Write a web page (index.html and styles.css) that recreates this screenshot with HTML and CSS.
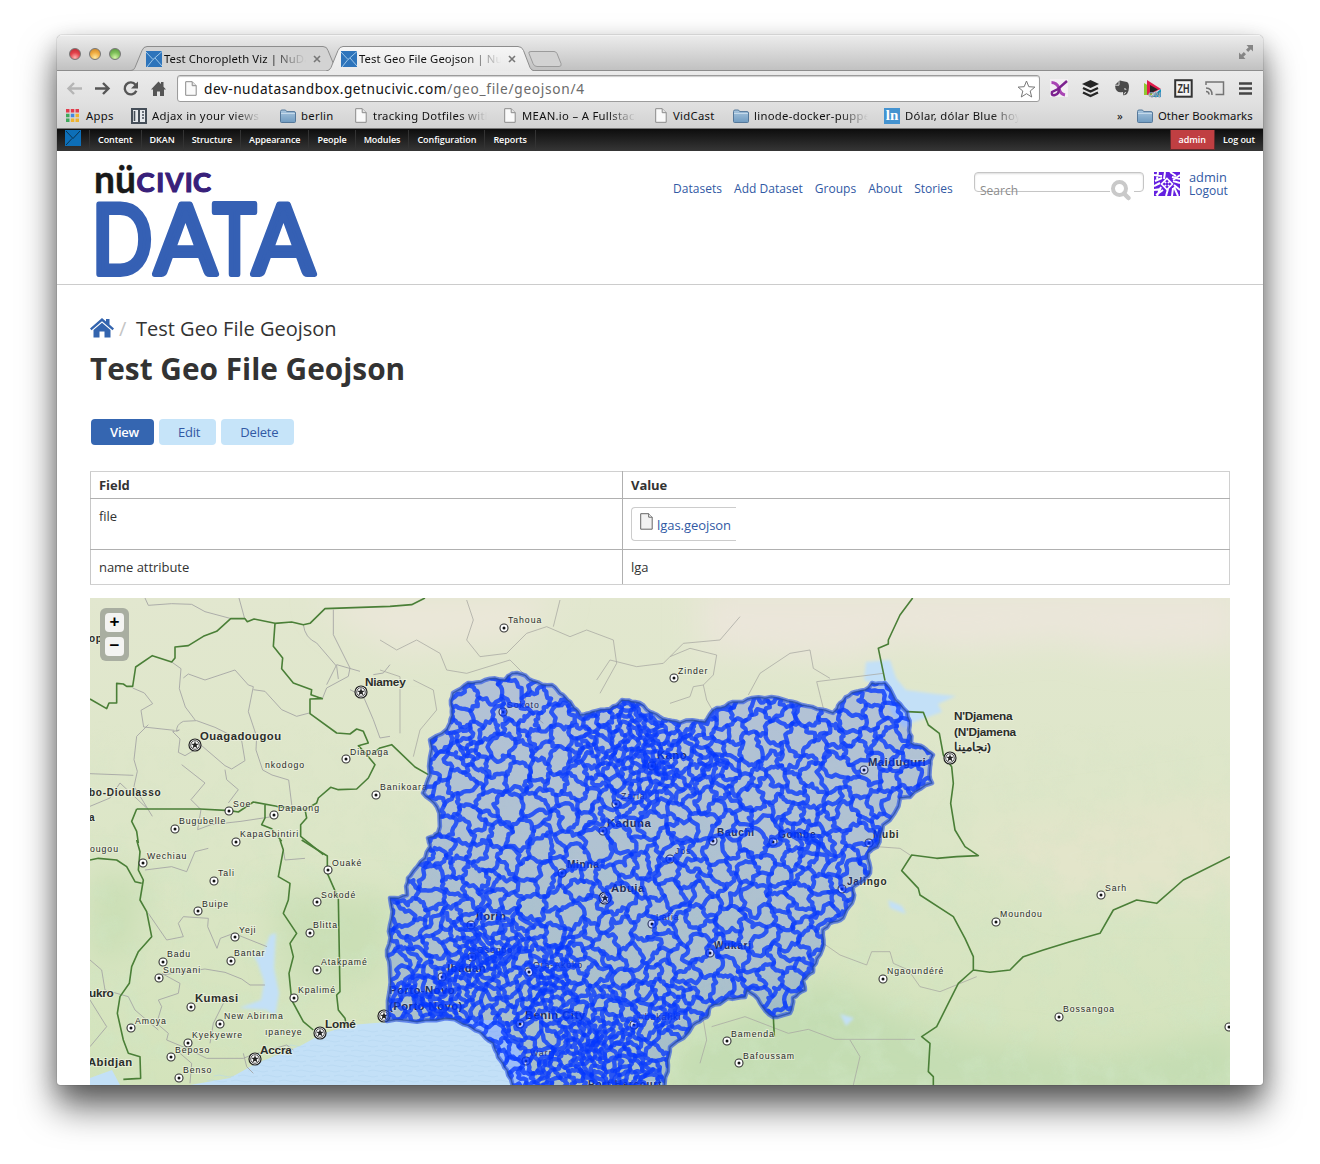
FILE: index.html
```html
<!DOCTYPE html>
<html lang="en">
<head>
<meta charset="utf-8">
<title>Test Geo File Geojson | NuData</title>
<link rel="stylesheet" href="styles.css">
</head>
<body>
<svg width="0" height="0" class="defs">
  <defs>
    <linearGradient id="folderFill" x1="0" y1="0" x2="0" y2="1"><stop offset="0" stop-color="#a9c6df"/><stop offset="1" stop-color="#6f9bc0"/></linearGradient>
    <symbol id="folder" viewBox="0 0 16 14"><path d="M.5 12.500V2.500Q.5 1 2 1h3.500l1.200 1.600h7.300q1.500 0 1.500 1.400v8.500q0 1-1 1h-13q-1 0-1-1z" fill="url(#folderFill)" stroke="#55789a"/><path d="M1 4.500h14" stroke="#c4d9ea"/></symbol>
    <symbol id="page" viewBox="0 0 12 15"><path d="M.7.7h6.500l4 4v9.600H.7z" fill="#fafafa" stroke="#8b8b8b"/><path d="M7.200.7v4h4" fill="#e4e4e4" stroke="#8b8b8b"/></symbol>
    <symbol id="brand" viewBox="0 0 16 16"><path d="M0 0h16v16H0z" fill="#2d74bb"/><path d="M0 1l7 7.500L16 .5M7 8.500L1 16M9 7l7 8" stroke="#a9d0ee" stroke-width=".9" fill="none"/></symbol>
  </defs>
</svg>
<div class="window">
  <div class="tabstrip">
    <svg class="tabshapes" width="1206" height="36" viewBox="57 35 1206 36">
      <defs><linearGradient id="tabOn" x1="0" y1="0" x2="0" y2="1"><stop offset="0" stop-color="#f6f6f6"/><stop offset="1" stop-color="#e9e9e9"/></linearGradient></defs>
      <path d="M57 70.500H1263" stroke="#8d8d8d"/>
      <path d="M131 70.500q3 0 4-3l7-17q1.500-4 5-4h176q4 0 5 4l7 17q1 3 4 3" fill="#d3d3d3" stroke="#8d8d8d"/>
      <path d="M326 71q4-.5 5-3.500l7-17q1.500-4 5-4h175q4 0 5.500 4l6.500 17q1 3 5 3.500" fill="url(#tabOn)" stroke="#8d8d8d"/>
      <path d="M531 51.500h23q2 0 3 2l4 10q1 3-2 3h-22q-3 0-4-3l-4-10q-1-2 2-2z" fill="#d2d2d2" stroke="#9b9b9b"/>
    </svg>
    <div class="lights"><i class="red"></i><i class="amber"></i><i class="green"></i></div>
    <div class="tab"><svg width="16" height="16"><use href="#brand"/></svg><span class="fade">Test Choropleth Viz | NuData</span><svg class="close" width="8" height="8" viewBox="0 0 8 8"><path d="M1 1l6 6M7 1L1 7"/></svg></div>
    <div class="tab"><svg width="16" height="16"><use href="#brand"/></svg><span class="fade">Test Geo File Geojson | NuData</span><svg class="close" width="8" height="8" viewBox="0 0 8 8"><path d="M1 1l6 6M7 1L1 7"/></svg></div>
    <svg class="expand" width="14" height="14" viewBox="0 0 14 14" fill="#858585"><path d="M7.500 0H14v6.500L11.800 4.300 9.200 7 7 4.800 9.600 2.200zM6.500 14H0V7.500l2.200 2.200L4.800 7 7 9.200 4.400 11.800z"/></svg>
  </div>
  <div class="toolbar">
    <svg class="navicons" width="104" height="18" viewBox="64 80 104 18" fill="none" stroke-width="2.400">
      <path d="M82 88.500H69M74 83l-5.500 5.500 5.500 5.500" stroke="#b5b5b5"/>
      <path d="M95 88.500h13M103 83l5.500 5.500-5.500 5.500" stroke="#555"/>
      <path d="M135.500 84.700a6 6 0 1 0 .8 6" stroke="#555"/><path d="M138 81.500v7h-7z" fill="#555"/>
      <path d="M151 89.500l7.500-8 2.500 2.600v-2.100h2.500v4.800l2.500 2.700h-2v6.500h-4v-4.500h-3v4.500h-4v-6.500z" fill="#555"/>
    </svg>
    <div class="urlbar">
      <svg width="12" height="15"><use href="#page"/></svg>
      <span class="url">dev-nudatasandbox.getnucivic.com<em>/geo_file/geojson/4</em></span>
      <svg width="19" height="18" viewBox="0 0 19 18"><path d="M9.500 1l2.300 5.700 6.100.4-4.700 3.900 1.500 6-5.200-3.300L4.300 17l1.500-6L1.100 7.100l6.100-.4z" fill="#fff" stroke="#777"/></svg>
    </div>
    <svg class="extensions" width="210" height="22" viewBox="1047 78 210 22">
      <path d="M1050 79h18v18h-18z" fill="#f3eff3"/><path d="M1051.500 82.500q5 0 7.500 5.500 1 6 6 7" fill="none" stroke="#a945b4" stroke-width="3"/><path d="M1067 81l-9 8-6 3q-1 4 3 3 4-1 4-6" fill="none" stroke="#7d2290" stroke-width="2.500"/>
      <path d="M1090.500 80l8.500 4-8.500 4-8.500-4z" fill="#252525"/><path d="M1083 88l7.500 3.500 7.500-3.500M1083 92.500l7.500 3.500 7.500-3.500" fill="none" stroke="#252525" stroke-width="2.400"/>
      <path d="M1115 85l4-4q1-1 3 0l5 1q2 1 2 5t-2 7q-3 2-4 1v-3q-4 1-6-1-2-2-2-6z" fill="#4b4b4b"/><path d="M1115 85.200h4v-4M1124 89q2-1 2 1M1124 94.500q0-2 2-2" stroke="#d9d9d9" fill="none"/>
      <path d="M1144 83v12h8v-7z" fill="#8fc831"/><path d="M1147 80l14 9-14 6z" fill="#e11c4b"/><path d="M1150 85l8 4.500-8 4z" fill="#222"/><path d="M1161 89v8h-10z" fill="#159ac4"/><text x="1148.500" y="97" class="badge">ON</text>
      <rect x="1175.200" y="80.200" width="16.500" height="16.500" fill="#f4f4f4" stroke="#333" stroke-width="2"/><text x="1177.500" y="92.700" class="zh" textLength="12" lengthAdjust="spacingAndGlyphs">ZH</text>
      <path d="M1206 85v-3h17.500v12.500h-8M1206 88q6 0 6 7M1206 91.500q3 0 3 3" fill="none" stroke="#747474" stroke-width="1.500"/>
      <path d="M1239 83.500h13M1239 88.500h13M1239 93.500h13" stroke="#444" stroke-width="2.700"/>
    </svg>
  </div>
  <div class="bookmarks">
    <span class="bm apps"><svg width="13" height="13" viewBox="0 0 13 13"><path d="M0 0h3.500v3.500H0zM4.800 0h3.500v3.500H4.800zM9.500 0H13v3.500H9.500z" fill="#e23b4b"/><path d="M0 4.800h3.500v3.500H0z" fill="#3fa85a"/><path d="M4.800 4.800h3.500v3.500H4.800z" fill="#4387e0"/><path d="M9.500 4.800H13v3.500H9.500zM4.800 9.500h3.500V13H4.800zM9.500 9.500H13V13H9.500z" fill="#eeb32f"/><path d="M0 9.500h3.500V13H0z" fill="#3fa85a"/></svg>Apps</span>
    <span class="bm b1"><svg width="16" height="16" viewBox="0 0 16 16"><path d="M0 0h16v16H0z" fill="#454e58"/><path d="M2 2h5v12H2zM9 2h5v12H9z" fill="#e6e9ec"/><path d="M3.500 3v10M11 4h2M11 7h2M11 10h2" stroke="#454e58" stroke-width="1.600"/></svg><span class="fade">Adjax in your views - a</span></span>
    <span class="bm b2"><svg width="16" height="14"><use href="#folder"/></svg>berlin</span>
    <span class="bm b3"><svg width="12" height="15"><use href="#page"/></svg><span class="fade">tracking Dotfiles with git</span></span>
    <span class="bm b4"><svg width="12" height="15"><use href="#page"/></svg><span class="fade">MEAN.io – A Fullstack</span></span>
    <span class="bm b5"><svg width="12" height="15"><use href="#page"/></svg>VidCast</span>
    <span class="bm b6"><svg width="16" height="14"><use href="#folder"/></svg><span class="fade">linode-docker-puppet</span></span>
    <span class="bm b7"><i class="ln">ln</i><span class="fade">Dólar, dólar Blue hoy en</span></span>
    <span class="bm b8">»</span>
    <span class="bm b9"><svg width="16" height="14"><use href="#folder"/></svg>Other Bookmarks</span>
  </div>
  <nav class="admin">
    <svg width="16" height="16" viewBox="0 0 16 16"><path d="M0 0h16v16H0z" fill="#0d6fb8"/><path d="M1 1l7 7.500L15 1M7 8.500L1 15" stroke="#0b3350" fill="none"/></svg>
    <a>Content</a><a>DKAN</a><a>Structure</a><a>Appearance</a><a>People</a><a>Modules</a><a>Configuration</a><a class="last">Reports</a>
    <a class="user">admin</a><a class="out">Log out</a>
  </nav>
  <header class="head">
    <svg class="logo" width="226" height="120" viewBox="94 160 226 120">
      <text class="nu" y="192.500"><tspan x="94" textLength="21" lengthAdjust="spacingAndGlyphs">n</tspan><tspan x="115" textLength="21" lengthAdjust="spacingAndGlyphs">ü</tspan></text>
      <text class="civic" y="192.300"><tspan x="136.500" textLength="18" lengthAdjust="spacingAndGlyphs">C</tspan><tspan x="156.300">I</tspan><tspan x="165.500" textLength="18" lengthAdjust="spacingAndGlyphs">V</tspan><tspan x="184.800">I</tspan><tspan x="193" textLength="18" lengthAdjust="spacingAndGlyphs">C</tspan></text>
      <text class="data" y="273.800"><tspan x="91.500" textLength="61" lengthAdjust="spacingAndGlyphs">D</tspan><tspan x="154.500" textLength="62" lengthAdjust="spacingAndGlyphs">A</tspan><tspan x="213" textLength="43" lengthAdjust="spacingAndGlyphs">T</tspan><tspan x="252.500" textLength="62" lengthAdjust="spacingAndGlyphs">A</tspan></text>
    </svg>
    <div class="menu"><a>Datasets</a><a>Add Dataset</a><a>Groups</a><a>About</a><a>Stories</a></div>
    <div class="search"><span>Search</span><svg width="24" height="28" viewBox="0 0 24 28"><rect width="24" height="28" rx="3" fill="#fff"/><circle cx="9.500" cy="11.500" r="6.500" fill="none" stroke="#c9c9c9" stroke-width="4"/><path d="M14 16.500l4.500 4.500" stroke="#c9c9c9" stroke-width="4.500" stroke-linecap="round"/></svg></div>
    <svg class="avatar" width="26" height="24" viewBox="0 0 26 24"><path d="M0 0h26v24H0z" fill="#6420e0"/><g stroke="#fff" fill="none" stroke-width="2"><path d="M0 3l8 1M1 9l7-3M4 0l-1 7M11 0l-1 7M16 0l6 4M19 8l7-5M18 5l8 2M26 11l-7-2M26 18l-6-5M24 24l-4-9M18 24l1-8M12 24l2-7M9 18l-7 5M0 18l7-1M0 14l6-3M3 24l4-9"/><path d="M13 6.500l5.500 5.500-5.500 5.500L7.500 12zM10 9l6 6M16 9l-6 6" stroke-width="1.600"/></g><circle cx="13" cy="12" r="1.500" fill="#6420e0"/></svg>
    <div class="account"><a>admin</a><a>Logout</a></div>
  </header>
  <main class="content">
    <div class="crumb"><svg width="24" height="20" viewBox="0 0 24 20" fill="#3364ae"><path d="M0 10.500L12 0l4 3.500V1h3.500v5.500L24 10.500l-1.500 1.700L12 3.200 1.500 12.200z"/><path d="M3.500 12L12 4.800l8.500 7.200v7.500h-6v-6h-5v6h-6z"/></svg><i>/</i><span>Test Geo File Geojson</span></div>
    <h1>Test Geo File Geojson</h1>
    <div class="actions"><a class="active">View</a><a>Edit</a><a>Delete</a></div>
    <table>
      <tr class="r1"><th>Field</th><th>Value</th></tr>
      <tr class="r2"><td>file</td><td><span class="file"><svg width="13" height="17" viewBox="0 0 13 17"><path d="M.7.7h8l3.500 3.500v12H.7z" fill="#f2f2f2" stroke="#666"/><path d="M8.700.7v3.500h3.500" fill="#fff" stroke="#666"/></svg><a>lgas.geojson</a></span></td></tr>
      <tr class="r3"><td>name attribute</td><td>lga</td></tr>
    </table>
    <div class="map">
      <svg id="map" width="1140" height="487" viewBox="90 598 1140 487">
        <defs>
          <linearGradient id="land" x1="0" y1="0" x2="0" y2="1"><stop offset="0" stop-color="#e2e7cf"/><stop offset=".5" stop-color="#dce6c7"/><stop offset="1" stop-color="#d3e3bb"/></linearGradient>
          <filter id="soft" x="-30%" y="-30%" width="160%" height="160%"><feGaussianBlur stdDeviation="16"/></filter>
          <filter id="edge"><feGaussianBlur stdDeviation="1.500"/></filter>
          <filter id="mottle" x="0" y="0" width="100%" height="100%"><feTurbulence type="fractalNoise" baseFrequency=".035" numOctaves="4" seed="6"/><feColorMatrix values="0 0 0 0 .62  0 0 0 0 .79  0 0 0 0 .55  2.600 0 0 0 -1.150"/></filter>
          <linearGradient id="fadeDown" x1="0" y1="0" x2="0" y2="1"><stop offset=".25" stop-color="#000"/><stop offset=".6" stop-color="#aaa"/><stop offset="1" stop-color="#fff"/></linearGradient>
          <mask id="south"><path d="M90 598h1140v487H90z" fill="url(#fadeDown)"/></mask>
          <clipPath id="countryClip"><path class="country"/></clipPath>
        </defs>
        <path d="M90 598h1140v487H90z" fill="url(#land)"/>
        <g filter="url(#soft)">
          <path d="M700 590H1240V650L1120 655 1060 640 960 650 900 640 850 660 700 650z" fill="#ebe6da"/>
          <path d="M320 595H560L520 640 400 650 340 620z" fill="#ebe7d9"/>
          <path d="M960 830L1240 790V900L1060 900z" fill="#e3e5ca"/>
          <path d="M680 1040L820 980 960 1040 1100 1060 1240 1030V1100H660z" fill="#c4ddb3"/>
          <path d="M90 870L150 880 130 960 90 960zM270 890L400 900 380 980 290 990z" fill="#cbdfb6"/>
        </g>
        <g mask="url(#south)"><path d="M90 598h1140v487H90z" filter="url(#mottle)" opacity=".5"/></g>
        <g fill="#c3e0f7">
          <path d="M190 1085L230 1078 255 1064 300 1046 322 1034 350 1025 388 1022 430 1020 500 1020 540 1085zM90 1078L112 1070 120 1085H90z"/>
          <path d="M866 662l24-2 6 18 10 12 30 4 20 2-18 8 4 8-28 10 -10 6-12-14-12-28-16-6z" filter="url(#edge)"/>
          <path d="M270 935l6-2-2 35 5 25-4 25-8-8-28-2 22-8 3-18-6-18-6-12 10 4zM888 900l14 6 4 8-16-6zM840 1014l14 4-8 8z" filter="url(#edge)"/>
        </g>
        <g id="waves" stroke="#b4d5f0" fill="none" opacity=".5"/>
        <g transform="translate(90 598) scale(.33333)" fill="none" stroke="#a3a3a3" stroke-width="2.600" stroke-linejoin="round">
          <path class="minor" d="M165 0l10 22 70-5 60 2 40 22 75 20M447 0l17 62M730 35v75l50 100-5 25-65 35-12 30M640 80q5 40 40 55l60 70 5 38M245 192l28 20-5 60 18 55 30 40M280 240l15-12 50 18 90-30 40 45 15 5-15 75 25 75-2 40 20 60 28 15 50 15 10 80M490 275l35 5 50 55 45 20 38-10M128 270l35 15 25 32-35 20 8 50 92 10M175 380l-35 35-8 70 10 35-10 45 55 90M260 400q-2-20 20-30l40-2 55 20 80 40 10 60-40 25-20-10-70-60-50 30-20-10 5-40-22-22 20-5zM275 500l70 55-42 50 30 30-10 60 40-15 90-10 100-15M405 515l5 30 35 30-30 40M0 527l130 5M0 625l60-25 30-45 80 75M810 220l-70-20-30 60M780 275l40 20 30 70 20 55 30-5M900 200l-20 25-30 5"/>
        </g>
        <g transform="translate(90 840) scale(.33333)" fill="none" stroke="#a3a3a3" stroke-width="2.600" stroke-linejoin="round">
          <path d="M165 90l80-10 45 15 25-60 40-10M175 220l55 80 50-10-15-40 15-20 75 5-2 25 28 65 10-30 40-15 100 40M215 400l55 30-5 30-60 20 10 20-15 50 35 30-5 20 60 25 60 30 110 0 25-10 105-30 20 15M215 405l130-18 60 10 50 20 25 18h45M400 490l-30 60-10 60M270 640l35 30-5 60M0 360l35 30 10 60 70 20 20 40 70 60M0 480l50 80-50 60M580 30l5 30 60-5M460 640l10 40 20 20"/>
        </g>
        <g transform="translate(670 640) scale(.33333)" fill="none" stroke="#a9a9a2" stroke-width="2.300" stroke-linejoin="round">
          <path d="M0 50l60-25 80 20-10 60-30 30 10 45 20 35M0 190l60-20 10-30 30-5M235 165l35-65 90-60 60-10 10 55 50 30M640 100l-200 25 20 80M460 910l50 35 80 30 15-40 55 0 10 35 45 20 35 50 60 15 110-45M125 1160l100-30 130 50 60-12 80 30 240 0M540 1200l30 50-20 85M620 620l70 5 30 20M100 1140l10 60-20 70"/>
        </g>
        <g transform="translate(380 600) scale(.33333)" fill="none" stroke="#a9a9a2" stroke-width="2.300" stroke-linejoin="round">
          <path d="M0 120l50 30 60-30 70 40 20 50 60 10 130-40 60 60-20 80 60 50M260 0l20 60-20 60 40 50 80-10 60-60 60-20 70 30 50-20 80 30 10 70-50 90M540 0l-20 80M650 240l40-60 80 20 80-10 60-60 110-10 60-70M60 400v-170l-60-20M100 470l20-80 50-60-10-60-60-30"/>
        </g>
        <g fill="none" stroke="#4a7f37" stroke-linejoin="round">
          <g transform="translate(90 598) scale(.33333)" stroke-width="4.800">
            <path d="M0 303L50 332 57 315H80V256L100 258 110 265 128 265 137 207 187 173 245 192 255 180V147L295 143 340 115 380 100 422 62H465L472 71 492 63 555 76 605 72 640 80 660 76 705 32 900 25 965 20 1005 0"/>
            <path d="M555 76L550 145 578 180 575 212 610 255 665 275 663 290 697 302 660 303V347L740 405 780 408 800 393 820 400 835 435 805 443 830 470 855 500 835 540 800 573 745 575 722 568 685 600 680 615 645 635 650 660 632 680V715L700 770M845 470L870 450 905 440 975 507 1015 530"/>
            <path d="M140 633L125 670 140 700 145 735M140 633H330L420 638 445 642 490 612 560 625 643 635M525 618V660L515 680 545 692 575 730"/>
          </g>
          <g transform="translate(90 840) scale(.33333)" stroke-width="4.800">
            <path d="M140 0L150 35 145 90 160 120 150 180 170 215 185 290 145 335 125 380 118 430 90 470 82 520 100 600 115 640 150 650 152 715 100 718M0 60L25 55 80 60 110 80 135 125 155 130"/>
            <path d="M570 0L580 30 565 110 600 130 595 180 580 220 620 280 600 310 610 350 597 400 605 480 640 545 670 570M635 0L712 48V100L745 175 750 455 740 465 745 510 765 535 770 560"/>
          </g>
          <g transform="translate(670 640) scale(.33333)" stroke-width="4.800">
            <path d="M728 -126L690 -75 655 0V12L625 25 645 122M710 215L760 217 775 255 808 280 820 345 845 380 850 430 842 490 855 570 885 620 925 647 860 650 800 655 725 645 695 692 745 745 750 765 850 830 885 895 910 950V990L865 1030 830 1100 800 1160 755 1190 780 1210 775 1295 790 1310V1335M910 990L960 997 1020 990 1060 950 1120 930 1200 905 1290 880 1330 810 1400 780 1460 790 1540 720 1680 650"/>
            <path d="M310 1130L313 1190"/>
          </g>
        </g>
        <g id="labels"></g>
        <path class="country" fill="#0033ff" fill-opacity=".2"/>
        <g clip-path="url(#countryClip)"><g id="districts" fill="none" stroke="#0033ff" stroke-opacity=".5" stroke-width="4.200" stroke-linejoin="round"></g></g>
        <path class="country" fill="none" stroke="#1f49e8" stroke-opacity=".6" stroke-width="4.500" stroke-linejoin="round"/>
        <path class="country" fill="none" stroke="#234a9c" stroke-opacity=".7" stroke-width="1.400" stroke-linejoin="round"/>
      </svg>
      <div class="zoomer"><b>+</b><b>−</b></div>
    </div>
  </main>
</div>
<script src="map.js"></script>
</body>
</html>
```
FILE: styles.css
```css
* { box-sizing: border-box; }
body { margin: 0; background: #fff; height: 1164px; overflow: hidden; font-family: "Open Sans", "Noto Sans", sans-serif; font-size: 13px; color: #333; }
svg { display: block; flex: none; }
.defs { position: absolute; }
.window { width: 1206px; height: 1050px; margin: 35px 0 0 57px; border-radius: 5px 5px 3px 3px; overflow: hidden; background: #fff; box-shadow: 0 0 1px rgba(0,0,0,.7), 0 22px 36px rgba(0,0,0,.6), 0 8px 22px rgba(0,0,0,.2); display: flex; flex-direction: column; }
.tabstrip, .toolbar, .bookmarks { font-family: "Noto Sans", sans-serif; color: #111; flex: none; }
.tabstrip { height: 36px; position: relative; display: flex; background: linear-gradient(#ebebeb, #dadada 40%, #c0c0c0); border-top: 1px solid #f4f4f4; }
.tabshapes { position: absolute; left: 0; top: -1px; }
.lights { display: flex; gap: 8px; padding: 12px 0 0 12px; width: 89px; position: relative; }
.lights i { width: 12px; height: 12px; border-radius: 50%; border: 1px solid #777; }
.red { background: radial-gradient(circle at 50% 85%, #ffb4b0, #e2424b 50%, #b92730); }
.amber { background: radial-gradient(circle at 50% 85%, #ffe9a0, #f0ad43 50%, #c88124); }
.green { background: radial-gradient(circle at 50% 85%, #d5f5a8, #7fc05b 50%, #55933a); }
.tab { position: relative; display: flex; width: 195px; height: 16px; margin-top: 15px; font-size: 11.300px; line-height: 16px; letter-spacing: .1px; }
.tab .fade { width: 142px; margin: 0 7px 0 2px; }
.close { margin-top: 4px; fill: none; stroke: #777; stroke-width: 1.600; }
.fade { overflow: hidden; white-space: nowrap; -webkit-mask-image: linear-gradient(90deg, #000 75%, transparent); mask-image: linear-gradient(90deg, #000 75%, transparent); }
.expand { margin: 9px 10px 0 auto; position: relative; }
.toolbar { height: 33px; background: linear-gradient(#ebebeb, #e0e0e0); display: flex; align-items: center; padding: 2px 6px 0 7px; }
.urlbar { margin-left: 9px; width: 863px; height: 27px; border: 1px solid #9c9c9c; border-radius: 3px; background: #fff; box-shadow: inset 0 1px 1px #ccc; display: flex; align-items: center; padding: 0 3px 0 7px; }
.url { flex: 1; margin-left: 7px; font-size: 13.700px; letter-spacing: .48px; color: #111; white-space: nowrap; }
.url em { font-style: normal; color: #6b6b6b; letter-spacing: .7px; }
.extensions { margin-left: 7px; }
.badge { font: bold 8px "Liberation Sans", sans-serif; fill: #fff; stroke: #246; stroke-width: .4px; }
.zh { font: bold 12px "Liberation Sans", sans-serif; fill: #333; }
.bookmarks { height: 25px; background: linear-gradient(#e0e0e0, #d2d2d2); border-bottom: 1px solid #777; display: grid; grid-template-columns: 65px 149px 75px 149px 151px 78px 151px 233px 20px 1fr; padding-left: 9px; font-size: 11.300px; letter-spacing: .3px; }
.bm { display: flex; align-items: center; white-space: nowrap; margin-top: -1px; }
.bm svg, .ln { margin-right: 5px; }
.apps svg { margin-right: 7px; }
.b3 svg, .b4 svg, .b5 svg { margin-right: 6px; }
.b1 .fade { width: 109px; } .b3 .fade, .b4 .fade { width: 114px; } .b6 .fade, .b7 .fade { width: 114px; }
.b9 { letter-spacing: .05px; }
.ln { width: 16px; height: 16px; background: #4493d0; color: #fff; font: bold 15px/15px "Liberation Serif", serif; text-align: center; letter-spacing: 0; }
.admin { height: 22px; flex: none; background: linear-gradient(#0d0d0d, #363636); display: flex; padding: 1px 0 0 8px; font-size: 9px; font-weight: 600; color: #fff; line-height: 20px; }
.admin svg { margin-right: 8px; }
.admin a { padding: 0 8px; border-left: 1px solid #333; letter-spacing: -.06px; }
.admin .last { border-right: 1px solid #333; }
.admin .user { margin-left: auto; background: #c03f42; border: 1px solid #642a2c; border-width: 0 1px 1px; height: 20px; }
.admin .out { border: 0; }
.head { height: 134px; flex: none; border-bottom: 1px solid #ccc; display: flex; padding-left: 37px; color: #3159a4; }
.logo { margin-top: 9px; }
.nu { font: 700 38px Lato, sans-serif; fill: #191919; stroke: #191919; stroke-width: .4px; stroke-linejoin: round; }
.civic { font: 700 27px Lato, sans-serif; fill: #38207a; stroke: #38207a; stroke-width: 1.200px; stroke-linejoin: round; }
.data { font: 400 96px Lato, sans-serif; fill: #3560b4; stroke: #3560b4; stroke-width: 6px; stroke-linejoin: round; }
.menu { display: flex; gap: 12px; margin: 29px 0 0 353px; font-size: 12px; letter-spacing: .03px; line-height: 18px; width: 280px; white-space: nowrap; }
.search { margin: 21px 0 0 21px; width: 170px; height: 20px; flex: none; border: 1px solid #c5c5c5; border-radius: 4px; box-shadow: inset 0 1px 2px #ddd; display: flex; justify-content: space-between; color: #8c8c8c; font-size: 12px; line-height: 16px; padding: 10px 9px 0 5px; }
.search svg { margin-top: -6px; }
.avatar { margin: 21px 0 0 10px; }
.account { display: flex; flex-direction: column; margin: 20px 0 0 9px; font-size: 12.800px; line-height: 13px; }
.account a + a { font-size: 12px; }
.content { padding: 30px 33px 0; }
.crumb { display: flex; align-items: center; height: 28px; font-size: 20px; line-height: 28px; }
.crumb svg { margin-top: -3px; }
.crumb i { color: #c5c5c5; margin: 0 11px 0 5px; width: 6px; font-style: normal; }
h1 { margin: 5px 0 0; height: 42px; font-size: 29.800px; line-height: 42px; font-weight: 700; }
.actions { display: flex; gap: 5px; margin: 29px 0 0 1px; }
.actions a { height: 26px; border-radius: 4px; background: #c6e4f9; color: #3159a4; padding: 0 16px 0 19px; font-size: 13px; line-height: 26px; letter-spacing: -.2px; }
.actions .active { background: #3566b1; color: #fff; font-weight: 600; padding-right: 15px; }
table { width: 1140px; margin-top: 26px; border-collapse: collapse; table-layout: fixed; font-size: 13px; line-height: 18px; }
th, td { text-align: left; vertical-align: top; border: 1px solid #b0b0b0; padding: 8px; letter-spacing: -.05px; }
th { border-top-color: #d0d0d0; }
th:first-child, td:first-child { border-left-color: #c8c8c8; }
th:last-child, td:last-child { border-right-color: #d0d0d0; }
.r3 td { border-bottom-color: #d0d0d0; }
table tr:first-child th:first-child { width: 532px; }
.r1 { height: 27px; } .r1 th { padding: 4px 8px; }
.r2 { height: 51px; } .r3 { height: 35px; }
.file { display: flex; align-items: center; width: 105px; height: 34px; border: 1px solid #ccc; border-right: 0; border-radius: 4px 0 0 4px; padding-left: 8px; color: #3159a4; }
.file svg { margin: -5px 4px 0 0; }
.file a { padding-top: 1px; }
.map { position: relative; margin-top: 13px; height: 487px; }
.zoomer { position: absolute; left: 10px; top: 10px; width: 29px; height: 53px; border-radius: 6px; background: #a9aea1; padding: 5px; display: flex; flex-direction: column; gap: 5px; }
.zoomer b { width: 19px; height: 19px; border-radius: 4px; background: #f4f4f2; font: bold 17px/18px "Liberation Sans", sans-serif; color: #000; text-align: center; }
#labels text { font-family: "Liberation Sans", Arial, sans-serif; fill: #2b2d2a; stroke: #eef2e0; stroke-width: 2px; stroke-opacity: .7; paint-order: stroke; }
#labels .s { font-size: 8.700px; letter-spacing: .95px; }
#labels .m { font-size: 10px; font-weight: bold; letter-spacing: .75px; }
#labels .l { font-size: 11.300px; font-weight: bold; letter-spacing: .45px; }
#labels .c { font-size: 11.800px; font-weight: bold; letter-spacing: -.25px; }
```
FILE: map.js
```js
const border = [[453,693],[468,683],[485,680],[505,680],[508,676],[517,673],[533,681],[552,685],[563,695],[572,705],[580,715],[592,712],[610,709],[622,700],[635,702],[650,712],[663,719],[680,723],[705,722],[717,708],[733,702],[752,698],[778,698],[797,703],[817,709],[833,713],[840,703],[852,693],[865,690],[872,683],[885,683],[893,695],[907,712],[909,730],[911,743],[923,747],[933,755],[930,767],[932,783],[910,797],[900,798],[883,825],[877,847],[868,853],[870,873],[865,878],[853,887],[852,903],[843,918],[830,923],[823,930],[822,950],[813,967],[813,972],[803,980],[805,990],[793,998],[790,1013],[773,1017],[760,1003],[747,990],[745,997],[728,998],[710,1007],[707,1017],[693,1025],[670,1047],[668,1065],[664,1090],[512,1090],[507,1070],[498,1057],[493,1043],[480,1032],[463,1024],[427,1020],[387,1021],[388,1010],[390,973],[387,950],[390,925],[390,898],[407,895],[408,878],[417,867],[430,847],[428,838],[438,833],[437,807],[423,793],[430,775],[430,740],[450,723],[452,708]];
let state = 11;
const rnd = () => { state = (state * 1664525 + 1013904223) >>> 0; return state / 4294967296; };
const wiggle = (a, b, s) => {
  const k = Math.sin(a * 12.9898 + b * 78.233) * 43758.5453;
  return (k - Math.floor(k) - .5) * s;
};
// Splits a segment at displaced midpoints so that it reads as a surveyed boundary.
const rough = (p, q, depth, amount) => {
  const dx = q[0] - p[0], dy = q[1] - p[1];
  if (!depth || Math.hypot(dx, dy) < 4) return [q];
  const w = wiggle(p[0] + q[0], p[1] + q[1], amount);
  const m = [(p[0] + q[0]) / 2 - dy * w, (p[1] + q[1]) / 2 + dx * w];
  return rough(p, m, depth - 1, amount).concat(rough(m, q, depth - 1, amount));
};
const line = pts => "M" + pts.map(p => p[0].toFixed(1) + " " + p[1].toFixed(1)).join("L");
let outline = [border[0]];
border.forEach((p, i) => { outline = outline.concat(rough(p, border[(i + 1) % border.length], 2, .22)); });
document.querySelectorAll(".country").forEach(e => e.setAttribute("d", line(outline) + "Z"));

const centres = [[883,690],[890,713],[857,707],[900,740],[817,730],[850,720],[783,730],[800,710],[757,707],[840,750],[803,763],[780,778],[750,750],[860,787],[830,780],[910,780],[917,753],[887,757],[883,800],[837,807],[810,793],[867,807],[757,813],[777,807],[720,827],[683,807],[683,830],[737,863],[757,840],[703,847],[730,890],[763,883],[850,860],[833,863],[857,840],[823,887],[837,903],[787,935],[747,930],[813,940],[787,963],[760,957],[780,1000],[750,977],[730,917],[703,920],[720,947],
[467,697],[493,690],[460,713],[513,710],[553,693],[530,723],[513,733],[440,740],[497,763],[520,763],[480,760],[537,770],[440,790],[443,820],[457,847],[417,873],[473,820],[523,790],[550,797],[493,783],[493,803],[497,837],[533,820],[560,813],[513,860],[493,860],[583,817],[613,817],[637,807],[570,840],[597,847],[620,840],[640,860],[540,850],[560,870],
[413,907],[457,887],[463,910],[497,903],[523,887],[530,917],[557,900],[587,913],[623,933],[593,933],[637,910],[663,943],[593,960],[613,960],[507,937],[560,937],[653,980]];
const crowd = [[652,762,36],[625,722,32],[640,745,40],[472,962,36],[500,950,32],[450,990,28],[425,1010,25],[600,1050,42],[585,1030,34],[620,1070,32],[540,990,28],[660,1010,22],[550,1070,28],[700,765,22],[555,960,22],[810,840,14],[470,745,14],[580,750,16]];
const spacing = (x, y) => {
  let d = 0;
  crowd.forEach(c => { d = Math.max(d, Math.exp(-((x - c[0]) ** 2 + (y - c[1]) ** 2) / (2 * c[2] * c[2]))); });
  return 18 - 12 * d;
};
for (let i = 0; i < 40000; i++) {
  const x = 375 + rnd() * 570, y = 664 + rnd() * 432, r = spacing(x, y) * (.75 + rnd() * .4);
  if (centres.every(c => Math.hypot(c[0] - x, c[1] - y) > r)) centres.push([x, y]);
}
// Bends the cell grid so that the districts lose their regular honeycomb look.
const bend = p => [
  p[0] + 4.500 * Math.sin(p[1] / 9 + p[0] / 31) + 2.500 * Math.sin(p[1] / 4.700 - p[0] / 17),
  p[1] + 4.500 * Math.sin(p[0] / 10 - p[1] / 27) + 2.500 * Math.sin(p[0] / 5.300 + p[1] / 13)
];
const shared = {};
let cells = "";
centres.forEach((c, i) => {
  let poly = [[350,640,-1],[970,640,-1],[970,1120,-1],[350,1120,-1]];
  centres.forEach((o, j) => {
    const nx = o[0] - c[0], ny = o[1] - c[1];
    if (i === j || nx * nx + ny * ny > 8100) return;
    const k = (o[0] ** 2 + o[1] ** 2 - c[0] ** 2 - c[1] ** 2) / 2;
    const next = [];
    poly.forEach((p, n) => {
      const q = poly[(n + 1) % poly.length];
      const a = p[0] * nx + p[1] * ny - k, b = q[0] * nx + q[1] * ny - k;
      if (a <= 0) next.push(p);
      if (a <= 0 !== b <= 0) {
        const t = a / (a - b);
        next.push([p[0] + (q[0] - p[0]) * t, p[1] + (q[1] - p[1]) * t, a <= 0 ? j : p[2]]);
      }
    });
    poly = next;
  });
  let ring = [];
  poly.forEach((p, n) => {
    const q = poly[(n + 1) % poly.length], key = Math.min(i, p[2]) + "-" + Math.max(i, p[2]);
    if (shared[key]) ring = ring.concat(shared[key].slice().reverse());
    else {
      const a = bend(p), run = [a].concat(rough(a, bend(q), 3, .7));
      if (p[2] >= 0) shared[key] = run;
      ring = ring.concat(run);
    }
  });
  cells += `<path d="${line(ring)}Z"/>`;
});
document.getElementById("districts").innerHTML = cells;

let swell = "";
for (let y = 1026; y < 1086; y += 5) for (let x = 200 + (y % 3) * 7; x < 500; x += 24) {
  if (y > 1086 - (x - 190) * .42 && y > 1028) swell += `M${x} ${y}q5-2 10 0t10 0`;
}
document.getElementById("waves").innerHTML = `<path d="${swell}"/>`;

// text, x, baseline, size class, marker x, marker y, capital
const places = [["Tahoua",508,623,"s",504,628],["Zinder",678,674,"s",674,678],["Niamey",365,686,"c",361,692,1],["Ouagadougou",200,740,"l",195,745,1],["Diapaga",350,755,"s",346,759],["nkodogo",265,768,"s"],["Banikoara",380,790,"s",376,795],["bo-Dioulasso",89,796,"m"],["Soe",233,807,"s",229,811],["Dapaong",278,811,"s",274,815],["Bugubelle",179,824,"s",175,829],["KapaGbintiri",240,837,"s",236,842],["a",89,821,"m"],["ougou",90,852,"s"],["Wechiau",147,859,"s",143,863],["Tali",218,876,"s",214,881],["Ouaké",332,866,"s",328,870],["Sokodé",321,898,"s",317,902],["Buipe",202,907,"s",198,911],["Blitta",313,928,"s",310,933],["Yeji",239,933,"s",235,937],["Bantar",234,956,"s",231,961],["Badu",167,957,"s",163,962],["Sunyani",163,973,"s",159,978],["Atakpamé",321,965,"s",317,970],["Kpalimé",298,993,"s",294,998],["Kumasi",195,1002,"l",191,1007],["New Abirıma",224,1019,"s",220,1024],["Amoya",135,1024,"s",131,1028],["ukro",89,997,"c"],["Kyekyewre",192,1038,"s",188,1043],["ıpaneye",265,1035,"s"],["Lomé",325,1028,"c",320,1033,1],["Beposo",175,1053,"s",171,1057],["Accra",260,1054,"c",255,1059,1],["Abidjan",88,1066,"l"],["Benso",183,1073,"s",179,1078],["opti",89,642,"m"],["Sokoto",507,708,"s",503,712],["Kano",657,759,"l",652,766],["Maiduguri",868,766,"l",864,770],["Zaria",621,799,"s",616,804],["Kaduna",607,827,"l",603,831],["Bauchi",717,836,"m",713,841],["Gombe",778,838,"m",773,842],["Mubi",873,838,"m",869,843],["Jos",675,854,"s",670,859],["Minna",567,868,"m",562,873],["Abuja",611,892,"l",605,898,1],["Jalingo",847,885,"m",842,889],["Lafia",656,920,"s",652,924],["Ilorin",476,920,"l",471,925],["Wukari",714,949,"m",710,953],["Osogbo",477,953,"s",472,957],["Ibadan",447,972,"l",442,977],["Ora-Akoko",533,968,"s",529,972],["Porto-Novo",389,994,"l",384,1016,1],["(Porto Novo)",389,1010,"l"],["Benin City",525,1019,"l",520,1024],["Abakaliki",638,1020,"s",634,1025],["Warri",530,1056,"s",526,1061],["Port Harcourt",588,1088,"m"],["Bamenda",731,1037,"s",727,1041],["Bafoussam",743,1059,"s",739,1063],["Ngaoundéré",887,974,"s",883,979],["Sarh",1105,891,"s",1101,895],["Moundou",1000,917,"s",996,922],["Bossangoa",1063,1012,"s",1059,1017],["N'Djamena",954,720,"c",950,758,1],["(N'Djamena",954,736,"c"],["نجامينا)",954,751,"c"],["",0,0,"s",1229,1027]];
document.getElementById("labels").innerHTML = places.map(([t, x, y, c, mx, my, cap]) => {
  let out = "";
  if (mx && cap) out += `<circle cx="${mx}" cy="${my}" r="6" fill="#fff" stroke="#222" stroke-width="1.200"/><circle cx="${mx}" cy="${my}" r="4.300" fill="#fff" stroke="#222" stroke-width=".8"/><path transform="translate(${mx} ${my})" d="M0-4L1-1.200H4L1.600.6 2.500 3.400 0 1.700-2.500 3.400-1.600.6-4-1.200H-1z" fill="#222"/>`;
  else if (mx) out += `<circle cx="${mx}" cy="${my}" r="4" fill="#fff" stroke="#333" stroke-width="1.100"/><circle cx="${mx}" cy="${my}" r="1.500" fill="#111"/>`;
  return out + (t ? `<text class="${c}" x="${x}" y="${y}">${t}</text>` : "");
}).join("");
```
